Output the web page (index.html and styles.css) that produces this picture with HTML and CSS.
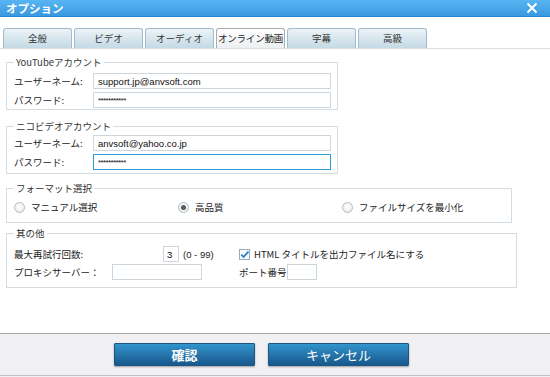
FILE: index.html
```html
<!DOCTYPE html>
<html lang="ja">
<head>
    <meta charset="UTF-8">
    <title>オプション</title>
    <link rel="stylesheet" href="styles.css">
</head>
<body>

<div class="window">
    <div class="titlebar">
        <span class="title">オプション</span>
        <svg class="closeIcon" width="12" height="12" viewBox="0 0 12 12">
            <path d="M1.5 1.5 L10.5 10.5 M10.5 1.5 L1.5 10.5" stroke="#fff" stroke-width="2" fill="none"/>
        </svg>
    </div>

    <div class="tabs">
        <div class="tab">全般</div>
        <div class="tab">ビデオ</div>
        <div class="tab">オーディオ</div>
        <div class="tab active">オンライン動画</div>
        <div class="tab">字幕</div>
        <div class="tab">高級</div>
    </div>

    <fieldset class="group groupYoutube">
        <legend>YouTubeアカウント</legend>
        <div class="row">
            <label class="fieldLabel">ユーザーネーム:</label>
            <input type="text" class="textInput" value="support.jp@anvsoft.com">
        </div>
        <div class="row">
            <label class="fieldLabel">パスワード:</label>
            <input type="text" class="textInput stars" value="***********">
        </div>
    </fieldset>

    <fieldset class="group groupNico">
        <legend>ニコビデオアカウント</legend>
        <div class="row">
            <label class="fieldLabel">ユーザーネーム:</label>
            <input type="text" class="textInput" value="anvsoft@yahoo.co.jp">
        </div>
        <div class="row">
            <label class="fieldLabel">パスワード:</label>
            <input type="text" class="textInput stars focused" value="***********">
        </div>
    </fieldset>

    <fieldset class="group groupFormat">
        <legend>フォーマット選択</legend>
        <div class="row radioRow">
            <div class="option"><span class="radio"></span>マニュアル選択</div>
            <div class="option"><span class="radio checked"></span>高品質</div>
            <div class="option"><span class="radio"></span>ファイルサイズを最小化</div>
        </div>
    </fieldset>

    <fieldset class="group groupOther">
        <legend>其の他</legend>
        <div class="row otherRow">
            <div class="leftCell">
                <span class="retryLabel">最大再試行回数:</span>
                <input type="text" class="smallInput retryInput" value="3">
                <span class="range">(0 - 99)</span>
            </div>
            <div class="checkItem">
                <svg class="checkbox" width="11" height="11" viewBox="0 0 11 11">
                    <rect x="0.5" y="0.5" width="10" height="10" fill="#f7f9fb" stroke="#9aabb8"/>
                    <path d="M2.3 5.6 L4.6 8 L9.4 2.6" stroke="#2d7fc6" stroke-width="1.8" fill="none"/>
                </svg>
                <span>HTML タイトルを出力ファイル名にする</span>
            </div>
        </div>
        <div class="row otherRow">
            <div class="leftCell">
                <span class="proxyLabel">プロキシサーバー：</span>
                <input type="text" class="smallInput proxyInput" value="">
            </div>
            <span>ポート番号</span>
            <input type="text" class="smallInput portInput" value="">
        </div>
    </fieldset>

    <div class="footer">
        <button type="button" class="dlgButton okButton">確認</button>
        <button type="button" class="dlgButton">キャンセル</button>
    </div>
</div>

</body>
</html>
```

FILE: styles.css
```css
body {
    margin: 0;
    font-family: "Noto Sans CJK JP", "Liberation Sans", sans-serif;
    font-size: 9.5px;
    color: #222;
    background-color: #f1f1f4;
}
.window {
    width: 550px;
    height: 377px;
    display: flex;
    flex-direction: column;
    background: #fff;
    overflow: hidden;
}
.titlebar {
    height: 16px;
    border-bottom: 1px solid #2d85cc;
    background: linear-gradient(#58b5f3, #3a98e0);
    display: flex;
    align-items: center;
    justify-content: space-between;
    padding: 0 12px 0 6px;
}
.title {
    color: #fff;
    font-size: 11.5px;
    font-weight: bold;
    line-height: 16px;
}
.closeIcon {
    display: block;
}
.tabs {
    margin-top: 11px;
    padding-left: 3px;
    height: 20px;
    display: flex;
    gap: 2px;
    border-bottom: 1px solid #d5dfe5;
}
.tab {
    width: 69px;
    box-sizing: border-box;
    height: 20px;
    border: 1px solid #a3bccb;
    border-bottom: none;
    border-radius: 3px 3px 0 0;
    background: linear-gradient(#ebf3f7, #c4dae5);
    color: #333;
    text-align: center;
    line-height: 19px;
    white-space: nowrap;
}
.tab.active {
    border-color: #a7adb2;
    background: linear-gradient(#ffffff, #eceff1);
    color: #222;
    letter-spacing: -0.2px;
}
.group {
    margin: 0 0 0 6px;
    padding: 0 0 0 7px;
    border: 1px solid #d3dde3;
    box-sizing: border-box;
}
.group legend {
    padding: 0 2px;
    line-height: 12px;
    color: #333;
}
.groupYoutube {
    width: 332px;
    margin-top: 7px;
    padding-bottom: 1px;
}
.groupNico {
    width: 332px;
    margin-top: 10px;
    padding-bottom: 3px;
}
.groupFormat {
    width: 506px;
    margin-top: 8px;
    padding-bottom: 8px;
}
.groupOther {
    width: 511px;
    margin-top: 4px;
    padding-bottom: 7px;
}
.row {
    display: flex;
    align-items: center;
    height: 16px;
    margin-top: 3px;
}
.groupYoutube .row:first-of-type {
    margin-top: 5px;
}
.fieldLabel {
    width: 79px;
}
.textInput {
    width: 238px;
    height: 16px;
    box-sizing: border-box;
    border: 1px solid #cdd6dc;
    padding: 0 0 0 4px;
    margin: 0;
    font-family: "Liberation Sans", "Noto Sans CJK JP", sans-serif;
    font-size: 9.5px;
    color: #111;
    outline: none;
}
.stars {
    font-size: 8px;
    letter-spacing: -0.6px;
}
.focused {
    border-color: #2f9bd6;
}
.radioRow {
    margin-top: 6px;
    height: 14px;
}
.option {
    width: 164px;
    display: flex;
    align-items: center;
}
.radio {
    width: 11px;
    height: 11px;
    box-sizing: border-box;
    border: 1px solid #b3bcc3;
    border-radius: 50%;
    background: radial-gradient(circle at 50% 40%, #ffffff, #e4e8eb);
    margin-right: 6px;
    display: flex;
    align-items: center;
    justify-content: center;
}
.radio.checked::after {
    content: "";
    width: 5px;
    height: 5px;
    border-radius: 50%;
    background: #555a5e;
}
.otherRow {
    margin-top: 2px;
}
.groupOther .otherRow:first-of-type {
    margin-top: 7px;
}
.leftCell {
    width: 225px;
    display: flex;
    align-items: center;
}
.retryLabel {
    width: 149px;
}
.proxyLabel {
    width: 98px;
}
.smallInput {
    height: 16px;
    box-sizing: border-box;
    border: 1px solid #cdd6dc;
    padding: 0 0 0 3px;
    margin: 0;
    font-family: "Liberation Sans", sans-serif;
    font-size: 9.5px;
    color: #111;
    outline: none;
}
.retryInput {
    width: 16px;
}
.proxyInput {
    width: 90px;
}
.portInput {
    width: 30px;
}
.range {
    margin-left: 4px;
    font-family: "Liberation Sans", sans-serif;
}
.checkItem {
    display: flex;
    align-items: center;
}
.checkbox {
    display: block;
    margin-right: 4px;
}
.checkItem span {
    font-size: 9.5px;
}
.footer {
    margin-top: auto;
    height: 44px;
    border-top: 1px solid #a9a9a9;
    background: #f1f1f4;
    box-shadow: inset 0 -1px 0 #f1f1f4, inset 0 -2px 0 #bfc1c4;
    display: flex;
    align-items: flex-start;
    gap: 13px;
    padding: 9px 0 0 114px;
    box-sizing: border-box;
}
.dlgButton {
    width: 141px;
    height: 23px;
    border: 1px solid #1d5583;
    border-radius: 1px;
    background: linear-gradient(#3195cc, #236fa5 60%, #17598c);
    box-shadow: 0 1px 2px rgba(0, 0, 0, 0.35);
    color: #fff;
    font-family: "Noto Sans CJK JP", sans-serif;
    font-size: 13px;
    line-height: 19px;
    padding: 0;
    cursor: pointer;
}
.okButton {
    font-weight: bold;
}
```
